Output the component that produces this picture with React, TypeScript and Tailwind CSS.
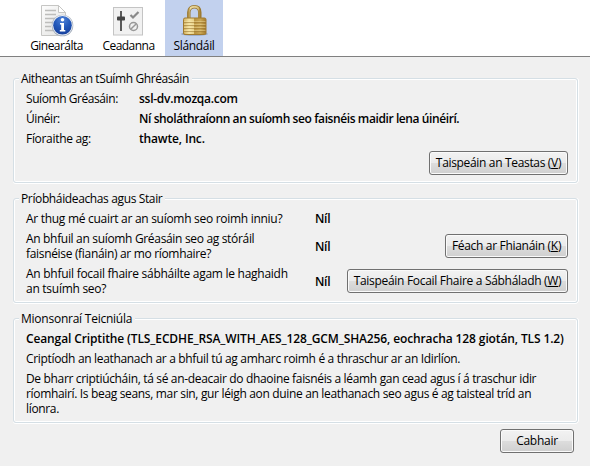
import type { ReactNode } from "react";

function PageInfoIcon() {
  return (
    <svg className="block h-8 w-8 overflow-visible" viewBox="0 0 32 32">
      <defs>
        <linearGradient id="paper" x1="0" y1="0" x2="1" y2="1">
          <stop offset="0" stopColor="#fdfdfd" />
          <stop offset="1" stopColor="#e2e2e0" />
        </linearGradient>
        <radialGradient id="ball" cx="0.5" cy="0.2" r="0.85">
          <stop offset="0" stopColor="#4f83d8" />
          <stop offset="0.5" stopColor="#2358ba" />
          <stop offset="1" stopColor="#153d98" />
        </radialGradient>
      </defs>
      <path d="M0.5 1.5H17.500L24.500 8.500V31.500H0.5Z" fill="url(#paper)" stroke="#c6c6c4" />
      <path d="M17.500 1.500V8.500H24.500Z" fill="#fff" stroke="#c6c6c4" />
      <path d="M4 6.500H15M4 10.500H15M4 14.500H14M4 18.500H11M4 22.500H10M4 26.500H12" stroke="#bdbdbb" strokeWidth="1.300" />
      <circle cx="21.500" cy="21.500" r="10.800" fill="#a3adbb" />
      <circle cx="21.500" cy="21.300" r="10.200" fill="#eef1f5" />
      <circle cx="21.500" cy="21.300" r="9.300" fill="url(#ball)" />
      <circle cx="21.500" cy="15.800" r="1.800" fill="#fff" />
      <path d="M19 19H23V26H24.300V27.500H18.800V26H20.200V20.500H19Z" fill="#fff" />
    </svg>
  );
}

function PermissionsIcon() {
  return (
    <svg className="block h-8 w-8" viewBox="0 0 32 32">
      <rect x="0.500" y="3.500" width="29" height="27.500" fill="#f1f1f1" stroke="#c4c4c4" />
      <path d="M8 7V27" stroke="#4a4a4a" strokeWidth="1.800" />
      <rect x="4" y="12.500" width="8" height="4" rx="0.800" fill="#444" />
      <path d="M17.500 11L20 13.500L25.500 8" fill="none" stroke="#8a8a8a" strokeWidth="2.200" />
      <circle cx="20.500" cy="22.500" r="4" fill="none" stroke="#999" strokeWidth="1.500" />
      <path d="M17.700 25.300L23.300 19.700" stroke="#999" strokeWidth="1.500" />
    </svg>
  );
}

function PadlockIcon() {
  return (
    <svg className="block h-8 w-8" viewBox="0 0 32 32">
      <defs>
        <linearGradient id="brass" x1="0" x2="1">
          <stop offset="0" stopColor="#d0ae5c" />
          <stop offset="0.25" stopColor="#f3e2a2" />
          <stop offset="0.47" stopColor="#e6ce85" />
          <stop offset="0.49" stopColor="#b8923f" />
          <stop offset="0.75" stopColor="#c9a654" />
          <stop offset="1" stopColor="#a47a2b" />
        </linearGradient>
        <linearGradient id="shackle" x1="0" x2="1">
          <stop offset="0" stopColor="#b08f45" />
          <stop offset="0.150" stopColor="#ecdba2" />
          <stop offset="0.850" stopColor="#dcc481" />
          <stop offset="1" stopColor="#a07d32" />
        </linearGradient>
      </defs>
      <ellipse cx="16.500" cy="30" rx="13.500" ry="1.800" fill="#7788a5" opacity="0.600" />
      <path d="M10.800 16V8.500C10.800 4.800 13 2.800 16.300 2.800S21.800 4.800 21.800 8.500V16" fill="none" stroke="#98772f" strokeWidth="3.400" />
      <path d="M10.800 16V8.500C10.800 4.800 13 2.800 16.300 2.800S21.800 4.800 21.800 8.500V16" fill="none" stroke="url(#shackle)" strokeWidth="1.900" />
      <rect x="5.500" y="14" width="22.500" height="16.500" rx="1.500" fill="url(#brass)" stroke="#a07a30" />
      <path d="M6 18.500H27.500M6 21.500H27.500M6 24.500H27.500M6 27.500H27.500" stroke="#9b7630" strokeWidth="0.800" opacity="0.700" />
      <path d="M6 17.500H27.500M6 20.500H27.500M6 23.500H27.500M6 26.500H27.500" stroke="#fff0b5" strokeWidth="0.800" opacity="0.450" />
    </svg>
  );
}

function Tab({ icon, width, selected, children }: { icon: ReactNode; width: string; selected?: boolean; children: ReactNode }) {
  return (
    <button className={`flex h-14 shrink-0 flex-col items-center pt-1 ${width} ${selected ? "bg-[#c2d1ee]" : ""}`}>
      {icon}
      <span className="mt-0.5 block">{children}</span>
    </button>
  );
}

function Group({ title, children }: { title: ReactNode; children: ReactNode }) {
  return (
    <fieldset className="h-[112px] min-w-0 rounded-[3px] border border-[#d5dfe5] px-[9px] shadow-[inset_0_0_0_1px_#fff,0_1px_0_#fff,1px_0_0_#fff]">
      <legend className="-ml-1 h-[15px] bg-[#f0f0f0] pr-[3px] pl-[2px]">{title}</legend>
      {children}
    </fieldset>
  );
}

function PushButton({ width, children }: { width: string; children: ReactNode }) {
  return (
    <button
      className={`flex h-6 shrink-0 items-center justify-center rounded-[3px] border border-[#707070] bg-[linear-gradient(#f2f2f2,#ebebeb_48%,#dddddd_50%,#cfcfcf)] pb-px shadow-[inset_0_0_0_1px_#fafafa] ${width}`}
    >
      <span>{children}</span>
    </button>
  );
}

export default function App() {
  return (
    <div className="flex h-[466px] w-[590px] flex-col overflow-hidden bg-[#f0f0f0] font-['Open_Sans',sans-serif] text-[12px] leading-[15px] whitespace-nowrap text-black">
      <header className="flex h-[57px] shrink-0 border-b border-[#808080] bg-white pl-5">
        <Tab width="w-[73px]" icon={<PageInfoIcon />}>
          <span className="tracking-[-0.545px]">Ginearálta</span>
        </Tab>
        <Tab width="w-[72px]" icon={<PermissionsIcon />}>
          <span className="-ml-px tracking-[-0.53px]">Ceadanna</span>
        </Tab>
        <Tab width="w-[58px]" icon={<PadlockIcon />} selected>
          <span className="tracking-[-0.32px]">Slándáil</span>
        </Tab>
      </header>

      <main className="flex flex-col gap-2 pt-3.5 pr-3 pl-[13px]">
        <Group title={<span className="tracking-[-0.4px]">Aitheantas an tSuímh Ghréasáin</span>}>
          <dl className="grid grid-cols-[113px_1fr] gap-y-[5px] pt-[5px] pl-[3px]">
            <dt className="tracking-[-0.43px]">Suíomh Gréasáin:</dt>
            <dd className="font-semibold tracking-[-0.27px]">ssl-dv.mozqa.com</dd>
            <dt className="tracking-[-0.45px]">Úinéir:</dt>
            <dd className="font-semibold tracking-[-0.405px]">Ní sholáthraíonn an suíomh seo faisnéis maidir lena úinéirí.</dd>
            <dt className="tracking-[-0.31px]">Fíoraithe ag:</dt>
            <dd className="font-semibold tracking-[-0.16px]">thawte, Inc.</dd>
          </dl>
          <div className="mt-[5px] flex justify-end">
            <PushButton width="w-[139px]">
              <span className="tracking-[-0.33px]">
                Taispeáin an Teastas (<u>V</u>)
              </span>
            </PushButton>
          </div>
        </Group>

        <Group title={<span className="tracking-[-0.37px]">Príobháideachas agus Stair</span>}>
          <div className="flex flex-col gap-[5px] pt-[5px] pl-[3px]">
            <div className="flex h-[15px]">
              <p className="w-[289px] tracking-[-0.29px]">Ar thug mé cuairt ar an suíomh seo roimh inniu?</p>
              <strong className="font-semibold tracking-[-0.3px]">Níl</strong>
            </div>
            <div className="flex h-[30px] items-center">
              <p className="w-[289px] pr-5 tracking-[-0.325px] whitespace-normal">
                An bhfuil an suíomh Gréasáin seo ag stóráil faisnéise (fianáin) ar mo ríomhaire?
              </p>
              <strong className="flex-1 font-semibold tracking-[-0.3px]">Níl</strong>
              <PushButton width="w-[123px]">
                <span className="tracking-[-0.31px]">
                  Féach ar Fhianáin (<u>K</u>)
                </span>
              </PushButton>
            </div>
            <div className="flex h-[30px] items-center">
              <p className="w-[289px] pr-5 tracking-[-0.27px] whitespace-normal">
                An bhfuil focail fhaire sábháilte agam le haghaidh an tsuímh seo?
              </p>
              <strong className="flex-1 font-semibold tracking-[-0.3px]">Níl</strong>
              <PushButton width="w-[221px]">
                <span className="tracking-[-0.3px]">
                  Taispeáin Focail Fhaire a Sábháladh (<u>W</u>)
                </span>
              </PushButton>
            </div>
          </div>
        </Group>

        <Group title={<span className="tracking-[-0.24px]">Mionsonraí Teicniúla</span>}>
          <div className="flex flex-col gap-[5px] pt-[5px] pl-[3px]">
            <strong className="font-semibold tracking-[-0.12px]">
              Ceangal Criptithe (TLS_ECDHE_RSA_WITH_AES_128_GCM_SHA256, eochracha 128 giotán, TLS 1.2)
            </strong>
            <p className="tracking-[-0.328px]">Criptíodh an leathanach ar a bhfuil tú ag amharc roimh é a thraschur ar an Idirlíon.</p>
            <p className="w-[520px] tracking-[-0.335px] whitespace-normal">
              De bharr criptiúcháin, tá sé an-deacair do dhaoine faisnéis a léamh gan cead agus í á traschur idir ríomhairí. Is
              beag seans, mar sin, gur léigh aon duine an leathanach seo agus é ag taisteal tríd an líonra.
            </p>
          </div>
        </Group>
      </main>

      <footer className="flex justify-end pt-1.5 pr-4">
        <PushButton width="w-[74px]">
          <span className="tracking-[-0.28px]">Cabhair</span>
        </PushButton>
      </footer>
    </div>
  );
}
